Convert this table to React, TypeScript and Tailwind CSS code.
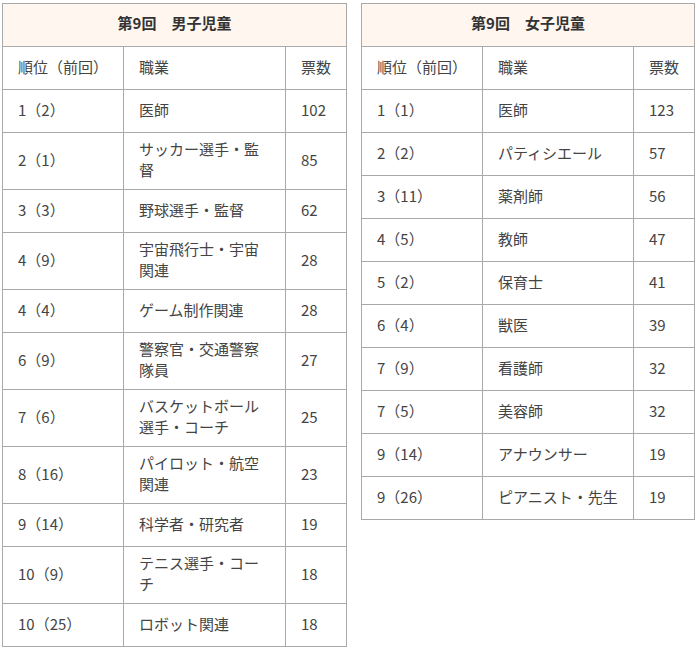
import React from "react";

type Row = [string, string, string];

const boys: Row[] = [
  ["1（2）", "医師", "102"],
  ["2（1）", "サッカー選手・監督", "85"],
  ["3（3）", "野球選手・監督", "62"],
  ["4（9）", "宇宙飛行士・宇宙関連", "28"],
  ["4（4）", "ゲーム制作関連", "28"],
  ["6（9）", "警察官・交通警察隊員", "27"],
  ["7（6）", "バスケットボール選手・コーチ", "25"],
  ["8（16）", "パイロット・航空関連", "23"],
  ["9（14）", "科学者・研究者", "19"],
  ["10（9）", "テニス選手・コーチ", "18"],
  ["10（25）", "ロボット関連", "18"],
];

const girls: Row[] = [
  ["1（1）", "医師", "123"],
  ["2（2）", "パティシエール", "57"],
  ["3（11）", "薬剤師", "56"],
  ["4（5）", "教師", "47"],
  ["5（2）", "保育士", "41"],
  ["6（4）", "獣医", "39"],
  ["7（9）", "看護師", "32"],
  ["7（5）", "美容師", "32"],
  ["9（14）", "アナウンサー", "19"],
  ["9（26）", "ピアニスト・先生", "19"],
];

function Table({
  title,
  rows,
  midW,
}: {
  title: string;
  rows: Row[];
  midW: string;
}) {
  const cell =
    "flex items-center px-[15px] pt-[5px] pb-[9px] min-h-[42px] leading-[21px] border-r border-[#aaaaaa]";
  return (
    <div className="flex flex-col border-l border-t border-[#aaaaaa] self-start">
      <div className="flex items-center justify-center h-[43px] pb-[3px] bg-[#fff7ef] border-r border-b border-[#aaaaaa] font-bold text-[15px] text-[#333333]">
        第9回　{title}
      </div>
      {[["順位（前回）", "職業", "票数"] as Row, ...rows].map((r, i) => (
        <div key={i} className="flex border-b border-[#aaaaaa]">
          <div className={`${cell} w-[121px] shrink-0`}>{r[0]}</div>
          <div className={`${cell} ${midW} shrink-0`}>{r[1]}</div>
          <div className={`${cell} w-[61px] shrink-0`}>{r[2]}</div>
        </div>
      ))}
    </div>
  );
}

export default function App() {
  return (
    <div
      className="flex gap-[14px] pl-[2px] pt-[3px] bg-white text-[15px] text-[#444444] w-[696px] h-[647px] overflow-hidden"
      style={{ fontFamily: '"Noto Sans CJK JP", "Noto Sans", sans-serif' }}
    >
      <Table title="男子児童" rows={boys} midW="w-[162px]" />
      <Table title="女子児童" rows={girls} midW="w-[151px]" />
    </div>
  );
}
